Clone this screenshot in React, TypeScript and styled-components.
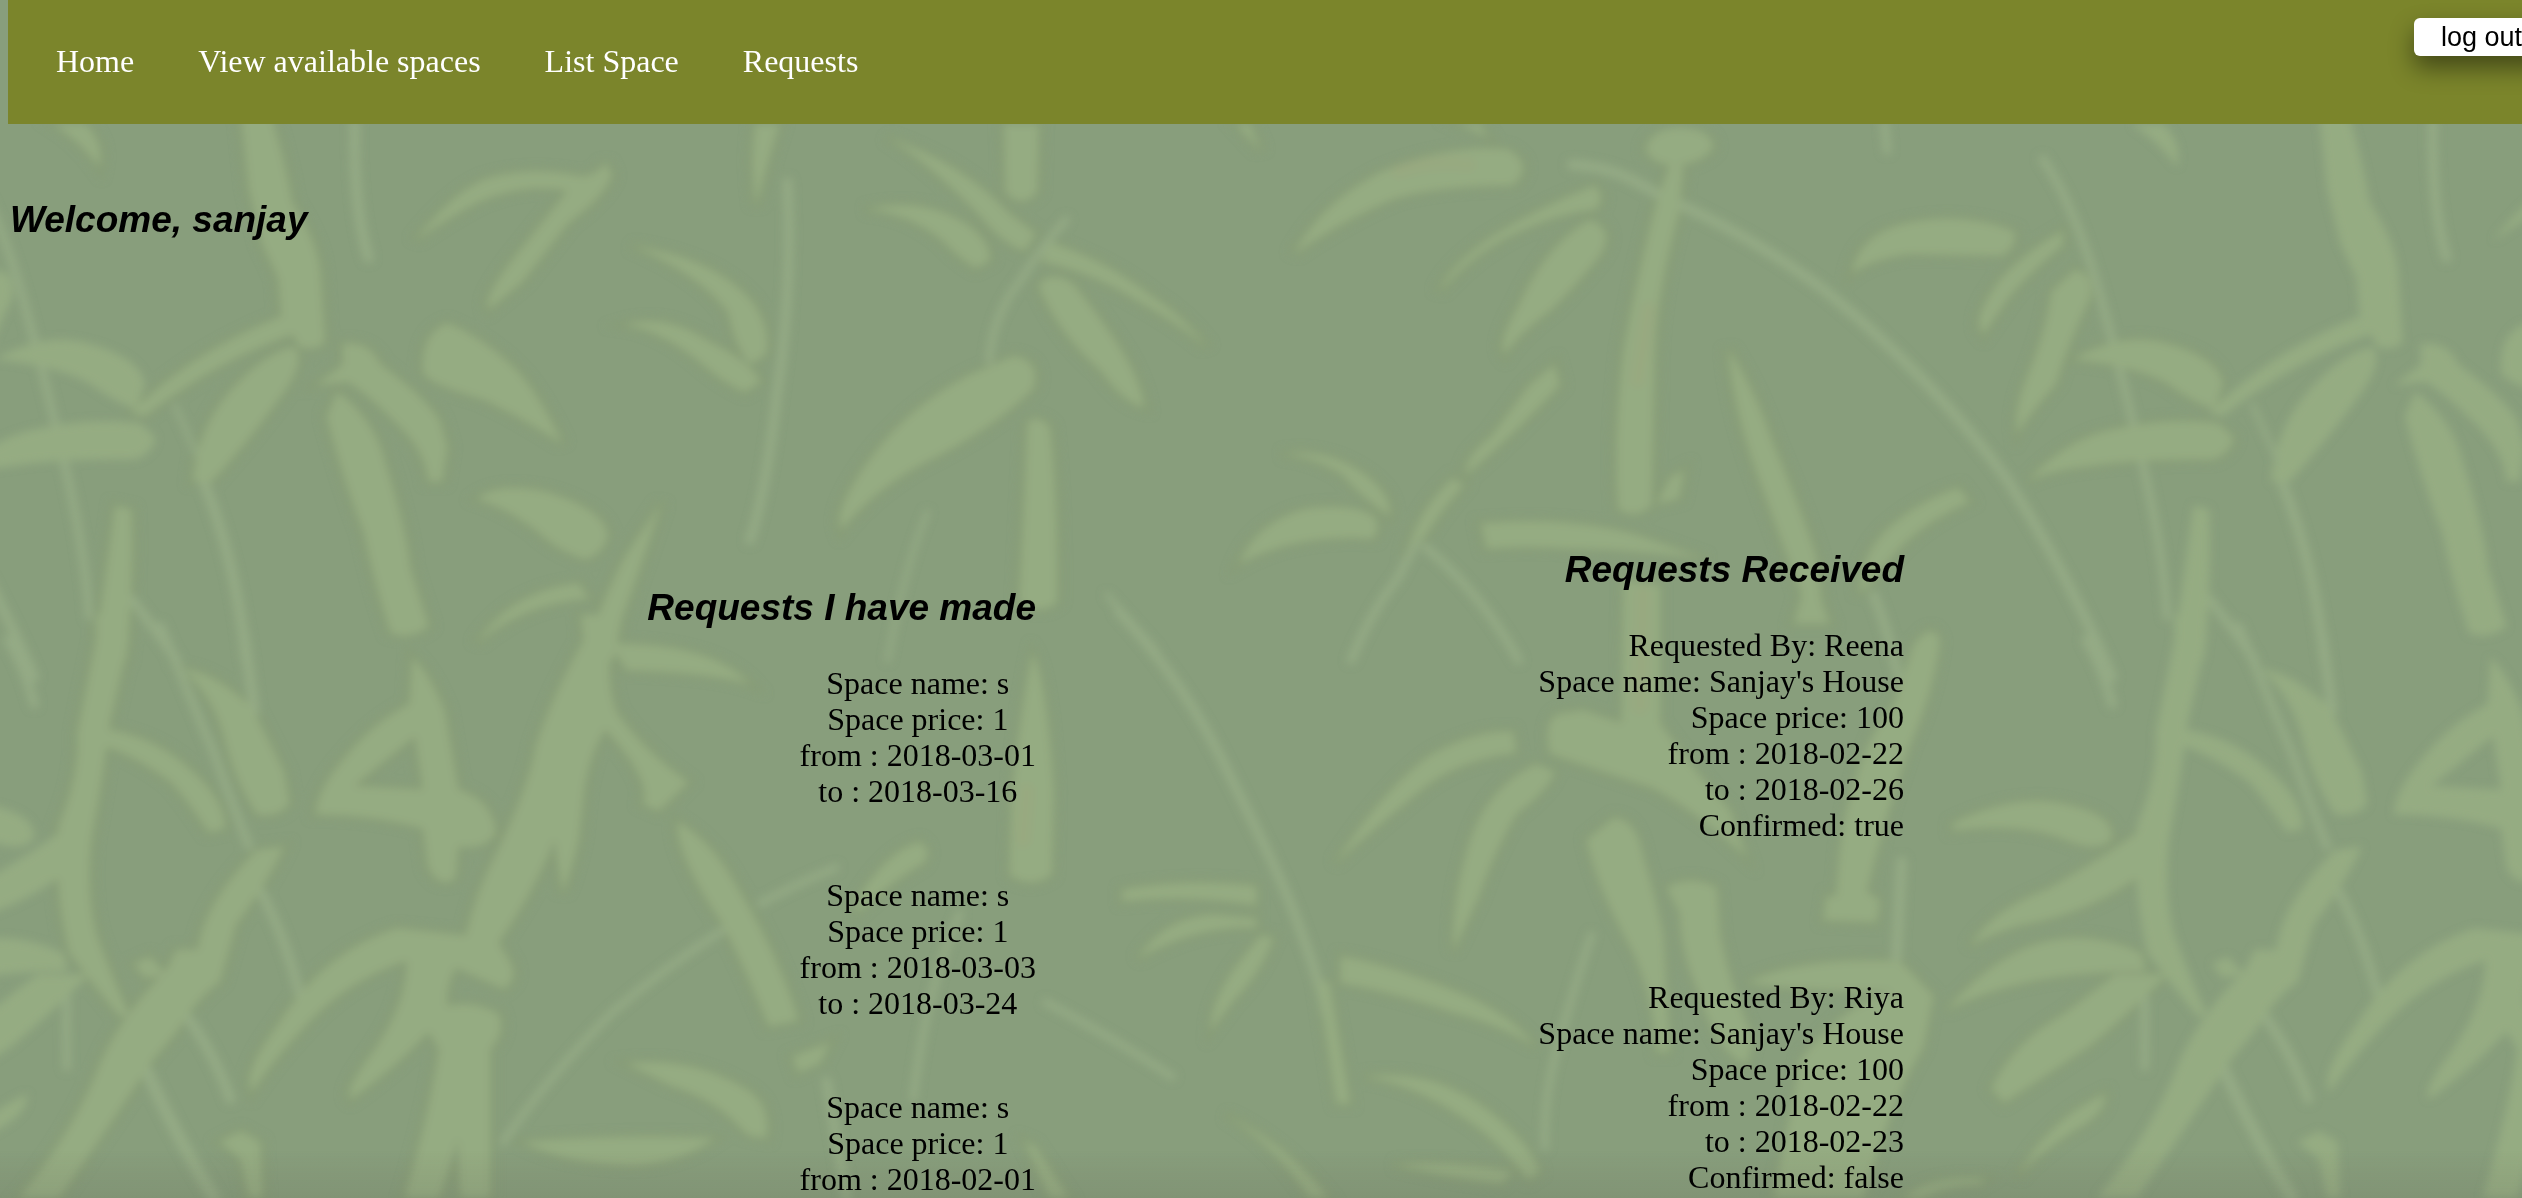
import React from 'react';
import styled, { createGlobalStyle } from 'styled-components';

const serif = '"Liberation Serif", "Times New Roman", serif';
const sans = '"Liberation Sans", Arial, sans-serif';

const GlobalStyle = createGlobalStyle`
  body {
    margin: 0;
    background: #889e7c;
    color: #000;
    font: 32px/36px ${serif};
  }
`;

const Page = styled.div`
  position: relative;
  height: 100vh;
  padding: 0 8px;
  box-sizing: border-box;
  overflow: hidden;
`;

const Backdrop = styled.svg`
  position: absolute;
  inset: 0;
  width: 100%;
  height: 100%;
  z-index: -1;
`;

const Shade = styled.div`
  position: absolute;
  inset: auto 0 0;
  height: 48px;
  background: linear-gradient(transparent, rgba(70, 60, 60, 0.1));
  z-index: -1;
`;

const Header = styled.header`
  display: flex;
  align-items: flex-start;
  justify-content: space-between;
  height: 124px;
  margin-right: -8px;
  padding-left: 16px;
  box-sizing: border-box;
  background: #7b852b;
`;

const Nav = styled.nav`
  display: flex;
  padding-top: 43px;
`;

const NavLink = styled.a`
  padding: 0 32px;
  color: #fff;
  text-decoration: none;
`;

const LogOut = styled.button`
  flex: none;
  height: 38px;
  margin: 18px -27px 0 0;
  padding: 0 27px;
  border: 0;
  border-radius: 6px;
  background: #fff;
  color: #000;
  font: 27px/38px ${sans};
  box-shadow: 0 12px 24px rgba(0, 0, 0, 0.45);
`;

const Heading = styled.h3`
  margin: 0;
  font: italic bold 37px/44px ${sans};
`;

const Welcome = styled(Heading)`
  padding: 74px 0 0 2px;
`;

const Columns = styled.main`
  display: grid;
  grid-template-columns: 1028fr 868fr 610fr;
  padding-top: 306px;
`;

const Column = styled.section<{ $drop?: number; $gap: number; $align: string }>`
  display: flex;
  flex-direction: column;
  align-items: flex-end;
  padding-top: ${(p) => p.$drop ?? 0}px;
  text-align: ${(p) => p.$align};

  & > article + article {
    margin-top: ${(p) => p.$gap}px;
  }
`;

const ColumnHeading = styled(Heading)`
  margin-bottom: 35px;
`;

const Line = styled.p`
  margin: 0;
`;

const links = ['Home', 'View available spaces', 'List Space', 'Requests'];

const made = [
  ['Space name: s', 'Space price: 1', 'from : 2018-03-01', 'to : 2018-03-16'],
  ['Space name: s', 'Space price: 1', 'from : 2018-03-03', 'to : 2018-03-24'],
  ['Space name: s', 'Space price: 1', 'from : 2018-02-01'],
];

const received = [
  ['Requested By: Reena', "Space name: Sanjay's House", 'Space price: 100', 'from : 2018-02-22', 'to : 2018-02-26', 'Confirmed: true'],
  ['Requested By: Riya', "Space name: Sanjay's House", 'Space price: 100', 'from : 2018-02-22', 'to : 2018-02-23', 'Confirmed: false'],
];

type Patch = { at: string; leaves: string[]; stems?: [string, number][]; tints?: [string, number][] };

/* Bamboo drawing, one patch per area of the wallpaper tile. */
const patches: Patch[] = [
  {
    at: 'translate(0 120) scale(.5357 .3444)',
    leaves: [
      'M100 12L160 12Q195 70 185 135Q150 60 100 12Z',
      'M440 -160L500 -160L510 12Q530 110 545 240Q595 360 598 450L606 640Q600 670 560 660L525 560L520 460L490 360L465 200Z',
      'M775 350Q840 220 900 175Q980 130 1090 165Q1125 150 1130 120L1142 160Q1130 220 1060 300L975 470L912 550Q900 520 960 400L1060 205Q980 180 890 240Q840 280 775 350Z',
      'M1180 365Q1330 400 1400 520Q1440 600 1430 680L1400 710Q1370 650 1360 560Q1310 450 1180 365Z',
      'M1165 595Q1240 560 1320 640Q1400 700 1420 760L1390 790Q1350 760 1320 720Q1240 610 1165 595Z',
      'M1410 12L1455 12Q1430 130 1412 250Q1400 130 1410 12Z',
      'M245 850Q340 700 480 600L540 560L550 620Q400 700 270 860Z',
      'M550 660Q570 700 530 790Q470 920 395 1050L360 1050Q370 880 440 770Q500 670 550 660Z',
      'M640 650Q690 640 710 710Q790 800 820 870L835 950L825 1050L800 1050Q795 960 740 880Q690 800 650 760L590 770L640 710Z',
      'M630 790Q700 870 720 1000Q760 1200 765 1300L800 1470Q770 1510 730 1490Q700 1350 680 1200Q640 1040 610 860Z',
      'M835 590Q900 630 960 720Q1000 780 1050 940Q960 850 900 810Q790 760 790 730Q785 620 835 590Z',
      'M890 1100Q930 1050 1020 1080Q1130 1130 1135 1210Q1120 1270 1090 1275Q1040 1250 1000 1190Q950 1130 890 1100Z',
      'M890 1520Q950 1370 1080 1345L1100 1390Q980 1400 890 1520Z',
      'M215 1120L245 1130Q250 1330 235 1568L175 1568Q200 1300 215 1120Z',
      'M1235 1110Q1200 1280 1160 1450L1145 1568L1090 1568Q1120 1400 1170 1260Z',
    ],
    stems: [
      ['M662 12Q660 260 688 400', 10],
      ['M1470 180Q1480 500 1450 800Q1430 1080 1400 1220', 9],
      ['M380 1050Q440 1280 460 1568', 10],
      ['M245 1390Q290 1480 330 1568', 9],
    ],
  },
  {
    at: 'translate(0 640) scale(.5357 .3559)',
    leaves: [
      'M180 -70L238 -70L240 0L205 230Q190 400 170 560Q160 720 180 830Q210 950 240 1050L225 1060Q170 960 130 880Q100 700 110 520Q150 380 145 260L180 0Z',
      'M530 580Q500 680 440 800L410 960Q370 1000 330 1100L285 1180Q210 1350 110 1568L35 1568Q140 1380 190 1180Q230 1050 310 930L330 870L370 870Q380 740 480 590Z',
      'M250 910L280 890L310 940L270 950Z',
      'M195 250Q290 270 360 370Q420 450 420 530L390 540Q350 450 320 400Q250 320 180 290Z',
      'M340 80Q400 90 470 190Q500 280 530 370L540 460Q520 500 480 490Q440 400 420 280Q400 160 340 80Z',
      'M770 50Q800 90 830 200L855 420Q920 450 925 540Q910 590 855 580L850 670Q820 700 800 640L790 530Q700 490 590 490Q590 420 650 320Q700 230 765 180ZM775 270L660 410L790 420Z',
      'M1085 -70L1145 -70L1140 0Q1130 120 1150 200Q1200 310 1285 400L1230 480L1200 460Q1220 400 1130 250Q1100 320 1090 420L1080 560Q1065 660 1050 710L1035 560Q1000 700 930 850L950 900Q970 950 940 980L850 920Q830 980 835 1030Q880 1010 930 1050Q945 1100 915 1150L915 1568L860 1568L855 1400L820 1568L755 1568Q800 1350 820 1150L800 1100Q740 1200 655 1290Q640 1270 700 1150Q760 1020 760 900Q640 960 560 1100Q510 1180 470 1270Q450 1220 520 1080Q600 880 740 810L870 830Q890 700 930 590Q990 400 1000 300Q1030 160 1090 0Z',
      'M1140 10Q1330 10 1400 125Q1330 90 1170 85Z',
      'M1265 510Q1330 570 1370 680Q1440 850 1480 1020L1490 1070L1435 1085Q1400 950 1350 800Q1260 600 1265 510Z',
      'M1170 1190Q1290 1170 1390 1260Q1440 1300 1430 1400L1395 1390Q1340 1290 1250 1250Z',
      'M975 1410Q1150 1390 1335 1400Q1270 1470 1180 1475Q1050 1470 975 1410Z',
      'M1480 1170L1550 1130L1530 1190L1490 1215Z',
      'M410 1410L450 1380L485 1410L490 1568L465 1568L450 1460Z',
    ],
    stems: [
      ['M480 690Q530 820 560 1000', 9],
      ['M345 1050Q400 1160 430 1290', 10],
      ['M270 1200Q330 1400 400 1568', 12],
      ['M300 -40Q360 180 400 320Q430 450 465 580', 8],
      ['M455 -20L475 200', 10],
      ['M940 1410Q1010 1250 1140 1050Q1240 920 1350 815M1420 740Q1480 690 1560 640', 7],
    ],
  },
  {
    at: 'translate(800 120) scale(.5485 .3444)',
    leaves: [
      'M160 50Q300 130 380 270L430 330L410 380Q370 360 330 280Q240 130 160 50Z',
      'M120 260Q230 220 310 310Q350 360 345 410L320 430Q290 400 260 350Q200 270 120 260Z',
      'M372 12L435 12L432 210Q405 260 375 210Z',
      'M455 355Q560 410 640 510Q700 570 742 660Q690 590 610 520Q530 440 440 410Z',
      'M435 480Q460 430 500 480Q560 600 590 680Q620 760 628 835Q590 820 550 730Q470 620 435 480Z',
      'M390 685Q440 700 425 780Q350 900 220 1000Q130 1080 75 1190Q60 1130 130 980Q200 830 310 740Z',
      'M415 880Q430 850 455 890Q470 1100 468 1400Q440 1440 400 1400Q410 1100 415 880Z',
      'M795 12L820 12L840 90Z',
      'M900 390Q950 240 1060 150Q1180 70 1290 85Q1340 130 1300 190Q1160 190 1080 230Q990 290 900 390Z',
      'M1200 12L1240 12L1255 50Z',
      'M1450 190Q1470 230 1450 260Q1380 270 1290 340Q1220 400 1165 500Q1180 430 1260 340Q1350 250 1450 190Z',
      'M1440 290Q1490 320 1455 400Q1420 470 1370 550Q1310 620 1285 680Q1270 650 1310 540Q1360 360 1440 290Z',
      'M1375 710L1385 770Q1310 900 1215 1030Q1210 980 1260 920L1330 770Z',
      'M1190 1040L1210 1060Q1160 1150 1140 1210L1110 1240Q1130 1130 1190 1040Z',
      'M880 970Q960 950 1030 1030Q1080 1090 1075 1150Q1020 1090 990 1030Q940 980 880 970Z',
      'M800 1290Q830 1170 920 1130Q1000 1110 1045 1150Q1060 1180 1045 1215Q900 1200 800 1290Z',
    ],
    stems: [
      ['M485 290Q440 370 400 470Q350 570 345 700', 7],
      ['M232 1140Q190 1300 160 1568', 5],
      ['M1125 1220L1090 1330Q1040 1430 1005 1568', 8],
      ['M1140 1240Q1240 1370 1310 1568', 8],
      ['M560 1380Q600 1450 650 1540', 5],
    ],
    tints: [['M1090 150Q1150 115 1220 130', 12]],
  },
  {
    at: 'translate(1240 120) scale(.5485 .3571)',
    leaves: [
      'M740 85Q745 25 805 22Q865 30 862 80Q840 120 800 125Q755 130 740 85Z',
      'M785 120L808 130L800 260Q755 500 755 700L750 1080Q720 1120 690 1090Q680 900 700 640Q730 400 760 230Z',
      'M785 1000L810 980L800 1060L760 1075Z',
      'M890 640Q940 760 970 900Q1020 1080 1050 1220L1060 1350L1075 1410L1010 1410L1025 1330Q990 1190 950 1020Q900 820 890 640Z',
      'M440 1130Q600 1110 720 1160L850 1230Q700 1200 600 1200Q520 1190 450 1200Z',
      'M1115 430Q1130 310 1230 285Q1320 260 1410 310Q1420 350 1390 380L1220 375Q1150 390 1115 430Z',
      'M1500 310L1500 350Q1430 440 1400 500L1355 600Q1330 560 1390 440Q1440 360 1500 310Z',
      'M1310 1030L1330 1070Q1240 1130 1190 1220L1130 1330Q1130 1200 1200 1120Q1250 1060 1310 1030Z',
    ],
    stems: [
      ['M605 125C680 130 720 170 770 215C900 300 990 390 1060 470C1200 640 1320 840 1400 1010C1480 1200 1540 1380 1590 1560', 10],
      ['M1155 1330Q1180 1420 1200 1560', 9],
      ['M1175 12L1180 85', 8],
    ],
    tints: [['M745 530L725 730', 14]],
  },
  {
    at: 'translate(1500 520) scale(.3333 .4324)',
    leaves: [
      'M1240 290Q1300 230 1320 280Q1300 400 1230 520Q1150 700 1100 860L1140 880L1130 930L970 925L980 870L1010 870Q1020 700 1060 620Q1100 500 1180 430Z',
      'M370 140L480 150L480 470Q580 580 690 670L740 780Q600 680 460 620Q300 580 150 540Q130 470 170 450L250 440L365 470Z',
      'M340 690Q410 690 430 780Q470 880 490 960L510 1230L470 1230Q460 1100 400 1000Q290 850 260 740Z',
      'M500 850Q570 820 650 850L660 960Q690 1080 760 1200L740 1260Q650 1230 600 1100Q540 1000 540 910Z',
      'M740 1070Q900 1010 1200 1020L1300 1100L1270 1220Q1180 1330 1090 1568L820 1568Q880 1350 900 1250Q1030 1120 1180 1090Q900 1090 740 1070Z',
    ],
    stems: [
      ['M275 960Q230 1060 180 1200Q130 1320 135 1450', 7],
      ['M1205 790L1190 1010', 10],
    ],
    tints: [['M430 170L420 430', 16]],
  },
  {
    at: 'translate(1000 600) scale(.3827 .3814)',
    leaves: [
      'M830 1000L860 1000L915 1320L880 1320Z',
      'M320 760Q480 730 670 750L670 800Q500 770 320 790Z',
      'M360 940Q430 830 560 825L670 835L670 860Q520 850 360 940Z',
      'M680 880L715 885Q680 980 610 1050L550 1130Q550 1060 610 970Z',
      'M875 690Q1000 500 1120 410Q1240 340 1340 345L1350 400Q1200 420 1110 490Q1000 580 875 690Z',
      'M1400 430L1450 450Q1430 500 1350 560Q1290 660 1250 780L1185 920Q1180 800 1220 660Q1260 500 1400 430Z',
      'M890 935Q1000 950 1200 1030Q1340 1090 1400 1170Q1300 1110 1180 1080Q1000 1020 890 1005Z',
      'M950 1250Q1120 1230 1250 1320Q1380 1410 1410 1500L1380 1520Q1300 1410 1200 1350Q1080 1270 950 1250Z',
      'M1030 1480Q1200 1470 1340 1500L1310 1530Q1150 1510 1030 1480Z',
      'M590 1350Q740 1420 860 1568L810 1568Q720 1430 590 1350Z',
      'M65 1420L90 1430L180 1568L130 1568Z',
      'M85 140Q120 200 140 500L135 720Q80 760 25 720L30 520Q60 250 85 140Z',
    ],
    stems: [
      ['M310 30C430 160 530 310 600 460C690 640 750 760 790 880C820 960 840 1020 850 1080', 9],
      ['M120 1055Q300 1150 450 1250', 7],
    ],
    tints: [['M70 500L60 630', 14]],
  },
  {
    at: 'translate(600 540) scale(.3333 .4196)',
    leaves: ['M770 860Q860 740 960 720Q1000 740 970 770Q880 810 770 890Z'],
    stems: [
      ['M1080 890Q980 1060 940 1330', 7],
      ['M680 1290L740 1568', 9],
    ],
  },
  {
    at: 'translate(1850 120) scale(.4286 .3571)',
    leaves: [
      'M525 420Q570 430 560 500Q510 620 480 740Q420 820 390 880Q380 810 420 700Q460 580 470 480Z',
      'M520 670Q620 600 720 620Q860 660 870 740L850 810Q800 790 750 745Q680 690 520 670Z',
      'M415 1010Q500 900 600 870Q740 830 860 850L895 890Q890 930 850 950Q650 950 550 970Q470 980 415 1010Z',
    ],
    stems: [
      ['M450 110Q530 250 590 520Q640 740 680 950Q730 1200 740 1390', 8],
      ['M940 800Q970 880 1000 960', 5],
    ],
  },
  {
    at: 'translate(1850 640) scale(.4286 .3559)',
    leaves: [
      'M240 515Q400 420 530 470Q620 500 610 560Q580 600 500 560Q400 510 240 535Z',
      'M280 860Q330 760 460 700Q580 620 660 550L700 520L690 650Q560 770 400 800Q320 830 280 860Z',
      'M225 1040Q300 930 400 870Q540 800 680 880L690 930Q400 930 225 1040Z',
      'M330 1260Q380 1130 500 1050L620 940L740 940Q660 1040 560 1140L360 1300Z',
      'M390 1510Q460 1350 595 1275Q600 1330 520 1380Q440 1440 390 1510Z',
      'M120 1568Q200 1500 320 1515L300 1530Q220 1530 170 1568Z',
    ],
    stems: [
      ['M687 960L688 1200', 8],
      ['M550 0Q590 80 612 180', 9],
    ],
  },
];

function Bamboo() {
  return (
    <Backdrop viewBox="0 0 2522 1198" preserveAspectRatio="xMinYMin slice" aria-hidden="true">
      <defs>
        <filter id="soft" filterUnits="userSpaceOnUse" x="-100" y="0" width="2700" height="1260">
          <feGaussianBlur stdDeviation="4" />
        </filter>
        <g id="tile">
          {patches.map((patch) => (
            <g key={patch.at} transform={patch.at}>
              {patch.stems?.map(([d, w]) => (
                <path key={d} d={d} fill="none" stroke="#94aa85" strokeWidth={w} strokeLinecap="round" vectorEffect="non-scaling-stroke" />
              ))}
              {patch.leaves.map((d) => (
                <path key={d} d={d} fill="#95ac82" fillRule="evenodd" />
              ))}
              {patch.tints?.map(([d, w]) => (
                <path key={d} d={d} fill="none" stroke="#98a980" strokeWidth={w} strokeLinecap="round" vectorEffect="non-scaling-stroke" />
              ))}
            </g>
          ))}
        </g>
      </defs>
      <g filter="url(#soft)">
        <use href="#tile" stroke="#879c77" strokeWidth="24" />
        <use href="#tile" x="-2078" />
        <use href="#tile" x="2078" />
        <use href="#tile" />
      </g>
    </Backdrop>
  );
}

function Request({ lines }: { lines: string[] }) {
  return (
    <article>
      {lines.map((line) => (
        <Line key={line}>{line}</Line>
      ))}
    </article>
  );
}

export default function App() {
  return (
    <Page>
      <GlobalStyle />
      <Bamboo />
      <Shade />
      <Header>
        <Nav>
          {links.map((label) => (
            <NavLink key={label} href="#">{label}</NavLink>
          ))}
        </Nav>
        <LogOut type="button">log out</LogOut>
      </Header>
      <Welcome>Welcome, sanjay</Welcome>
      <Columns>
        <Column $align="center" $gap={68} $drop={38}>
          <ColumnHeading>Requests I have made</ColumnHeading>
          {made.map((lines, i) => <Request key={i} lines={lines} />)}
        </Column>
        <Column $align="right" $gap={136}>
          <ColumnHeading>Requests Received</ColumnHeading>
          {received.map((lines, i) => <Request key={i} lines={lines} />)}
        </Column>
      </Columns>
    </Page>
  );
}
